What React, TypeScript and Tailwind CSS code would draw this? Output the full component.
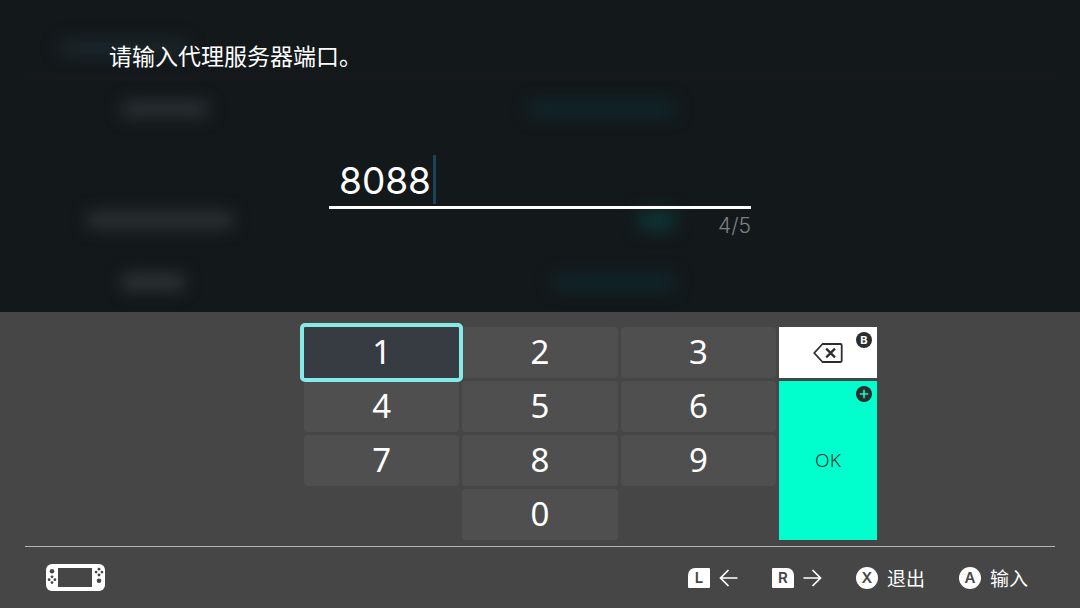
import React, { useState } from 'react';

const MAX_LENGTH = 5;
const KEYS = ['1', '2', '3', '4', '5', '6', '7', '8', '9', '0'];

// Blurred settings page that stays visible behind the dialog
const Backdrop: React.FC = () => (
  <div aria-hidden="true" className="absolute inset-0 overflow-hidden pt-10">
    <div className="mx-6 h-10 border-b-8 border-[#15191c] px-9">
      <div className="h-4 w-32 bg-[#1c262b] blur-[8px]" />
    </div>
    <div className="w-[675px]">
      <div className="flex h-[58px] items-center justify-between pl-[122px]">
        <div className="h-4 w-[86px] bg-[#2a3033] blur-[8px]" />
        <div className="h-4 w-[146px] bg-[#10262a] blur-[8px]" />
      </div>
      <div className="mt-[54px] flex h-14 items-center justify-between pl-[88px]">
        <div className="h-4 w-36 bg-[#2d3335] blur-[8px]" />
        <div className="h-5 w-9 bg-[#0e3533] blur-[8px]" />
      </div>
      <div className="flex h-[68px] items-center justify-between pl-[122px]">
        <div className="h-4 w-[62px] bg-[#2f3537] blur-[8px]" />
        <div className="h-4 w-[122px] bg-[#10262a] blur-[8px]" />
      </div>
    </div>
  </div>
);

const BackspaceIcon: React.FC = () => (
  <svg width="30" height="20" viewBox="0 0 30 20" fill="none" stroke="#2d2d2d" strokeWidth="1.8" strokeLinejoin="round">
    <path d="M9.5 1H27.5Q28.7 1 28.7 2.2V17.8Q28.7 19 27.5 19H9.5L1.2 10Z" />
    <path d="M13.2 5.6L22 14.4M22 5.6L13.2 14.4" strokeWidth="2.2" />
  </svg>
);

const PlusIcon: React.FC = () => (
  <svg width="16" height="16" viewBox="0 0 16 16">
    <circle cx="8" cy="8" r="8" fill="#2d2d2d" />
    <path d="M8 3.8V12.2M3.8 8H12.2" stroke="#00ffcc" strokeWidth="1.6" />
  </svg>
);

const ConsoleIcon: React.FC = () => (
  <svg width="59" height="27" viewBox="0 0 59 27" role="img" aria-label="Switch">
    <rect width="59" height="27" rx="6" fill="#fff" />
    <rect x="12" y="4" width="34" height="19" fill="#464646" />
    <g fill="#464646">
      <circle cx="6" cy="7.2" r="2.3" />
      <circle cx="6" cy="12.8" r="1.4" />
      <circle cx="6" cy="18.6" r="1.4" />
      <circle cx="3.1" cy="15.7" r="1.4" />
      <circle cx="8.9" cy="15.7" r="1.4" />
      <circle cx="53" cy="16.8" r="2.3" />
      <circle cx="53" cy="5.2" r="1.4" />
      <circle cx="53" cy="11" r="1.4" />
      <circle cx="50.1" cy="8.1" r="1.4" />
      <circle cx="55.9" cy="8.1" r="1.4" />
    </g>
  </svg>
);

const ArrowIcon: React.FC<{ direction: 'left' | 'right' }> = ({ direction }) => (
  <svg width="19" height="18" viewBox="0 0 19 18" fill="none" stroke="#fff" strokeWidth="1.7">
    {direction === 'left' ? (
      <path d="M18.5 9H1.5M9.5 1L1.5 9L9.5 17" />
    ) : (
      <path d="M.5 9H17.5M9.5 1L17.5 9L9.5 17" />
    )}
  </svg>
);

const App: React.FC = () => {
  const [value, setValue] = useState('8088');
  const [selected, setSelected] = useState('1');

  const handleKey = (key: string) => {
    setSelected(key);
    setValue((v) => (v + key).slice(0, MAX_LENGTH));
  };

  const handleDelete = () => setValue((v) => v.slice(0, -1));

  return (
    <div className="flex min-h-screen flex-col bg-[#464646] font-['Inter','Noto_Sans_CJK_SC',sans-serif] text-white">
      <main className="relative h-[312px] bg-[#13181b]">
        <Backdrop />
        <div className="relative pt-[39px]">
          <label
            htmlFor="port"
            className="ml-[109px] block font-['Noto_Sans_CJK_SC',sans-serif] text-[23px] leading-8"
          >
            请输入代理服务器端口。
          </label>
          <div className="mx-auto mt-[83px] w-[422px]">
            <div className="flex h-[55px] items-start gap-[2px] border-b-3 border-white pl-[10px]">
              <input
                id="port"
                type="text"
                inputMode="numeric"
                maxLength={MAX_LENGTH}
                value={value}
                onChange={(e) => setValue(e.target.value)}
                className="field-sizing-content h-[54px] bg-transparent text-[37px] caret-transparent outline-none"
              />
              <span className="mt-px h-[49px] w-[3px] bg-[#1c4258]" />
            </div>
            <p className="mt-1 text-right text-[21px] leading-[26px] font-light text-[#7c8082]">
              {value.length}/{MAX_LENGTH}
            </p>
          </div>
        </div>
      </main>

      <section className="mx-auto grid w-[674px] grid-cols-[98px_repeat(3,1fr)_98px] grid-rows-[repeat(4,51px)] gap-[3px] pt-[15px] font-['Noto_Sans',sans-serif]">
        {KEYS.map((key) => (
          <button
            key={key}
            type="button"
            onClick={() => handleKey(key)}
            className={`pb-[2px] text-[33px] leading-none ${
              key === '0' ? 'col-start-3' : '[&:nth-child(3n+1)]:col-start-2'
            } ${
              key === selected
                ? 'relative z-10 rounded-[1px] bg-[#373c43] outline-4 outline-[#86eae8]'
                : 'rounded-sm bg-[#4f4f4f]'
            }`}
          >
            {key}
          </button>
        ))}
        <button
          type="button"
          aria-label="Backspace"
          onClick={handleDelete}
          className="relative col-start-5 row-start-1 flex items-center justify-center bg-white"
        >
          <BackspaceIcon />
          <span className="absolute top-[5px] right-[5px] flex size-4 items-center justify-center rounded-full bg-[#2d2d2d] font-['Inter',sans-serif] text-[11px] leading-none font-bold">
            B
          </span>
        </button>
        <button
          type="button"
          className="relative col-start-5 row-span-3 row-start-2 bg-[#00ffcc] text-[19px] font-light text-[#2d2d2d]"
        >
          OK
          <span className="absolute top-[5px] right-[5px]">
            <PlusIcon />
          </span>
        </button>
      </section>

      <footer className="mx-[25px] mt-[6px] flex h-[62px] items-center justify-between border-t border-[#b4b4b4] pr-[27px] pl-[21px]">
        <ConsoleIcon />
        <div className="flex items-center gap-[34px] font-['Noto_Sans_CJK_SC',sans-serif] text-[19px] leading-6">
          <button type="button" aria-label="L" className="flex items-center gap-[9px]">
            <span className="flex h-5 w-[22px] items-center justify-center rounded-[1px] rounded-tl-[7px] bg-white font-['Inter',sans-serif] text-[15px] leading-none font-semibold text-[#464646]">
              L
            </span>
            <ArrowIcon direction="left" />
          </button>
          <button type="button" aria-label="R" className="flex items-center gap-[9px]">
            <span className="flex h-5 w-[22px] items-center justify-center rounded-[1px] rounded-tr-[7px] bg-white font-['Inter',sans-serif] text-[15px] leading-none font-semibold text-[#464646]">
              R
            </span>
            <ArrowIcon direction="right" />
          </button>
          <button type="button" className="flex items-center gap-[9px]">
            <span className="flex size-[22px] items-center justify-center rounded-full bg-white font-['Inter',sans-serif] text-[15px] leading-none font-semibold text-[#464646]">
              X
            </span>
            退出
          </button>
          <button type="button" className="flex items-center gap-[9px]">
            <span className="flex size-[22px] items-center justify-center rounded-full bg-white font-['Inter',sans-serif] text-[15px] leading-none font-semibold text-[#464646]">
              A
            </span>
            输入
          </button>
        </div>
      </footer>
    </div>
  );
};

export default App;
